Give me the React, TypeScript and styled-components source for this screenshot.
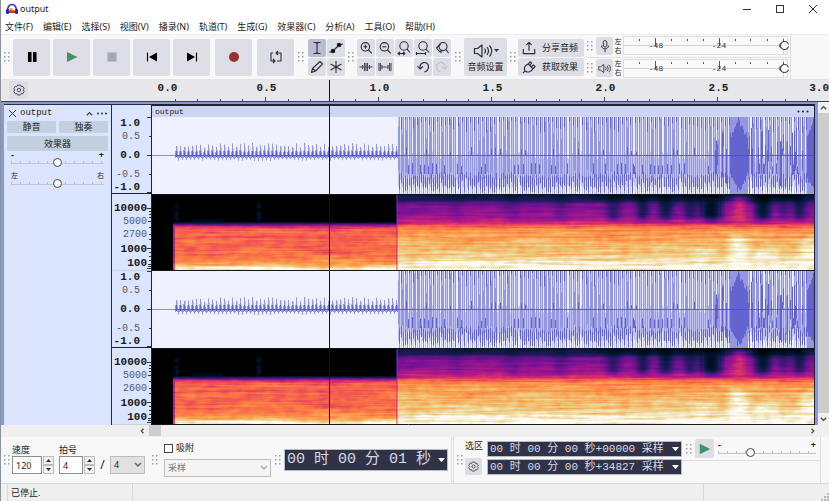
import React from "react";
import styled, { createGlobalStyle, css } from "styled-components";

const ui = `"Noto Sans", "Noto Sans CJK SC", sans-serif`;
const mono = `"Liberation Mono", "Noto Sans CJK SC", monospace`;

const GlobalStyle = createGlobalStyle`
  * { box-sizing: border-box; }
  body { margin: 0; background: #fff; overflow: hidden; }
  button, input, select { font: inherit; color: inherit; margin: 0; }
`;

const Window = styled.div`
  width: 100%;
  font: 9px/12px ${ui};
  color: #222;
  border-left: 1px solid #8a929a;
  background: #f0f0f0;
`;

/* ---------- title and menu ---------- */
const TitleBar = styled.header`
  display: flex;
  align-items: center;
  height: 18px;
  padding-left: 5px;
  background: #fff;
  svg { flex: none; }
`;
const Title = styled.span`
  flex: 1;
  margin-left: 2px;
`;
const WindowButton = styled.button`
  width: 33px;
  height: 18px;
  padding: 0;
  border: 0;
  background: none;
  display: grid;
  place-items: center;
`;
const MenuBar = styled.nav`
  display: flex;
  gap: 10px;
  height: 16px;
  padding: 2px 0 0 4px;
  background: #fff;
  white-space: nowrap;
`;
const MenuItem = styled.button`
  padding: 0;
  border: 0;
  background: none;
  line-height: 12px;
`;

/* ---------- toolbars ---------- */
const Toolbar = styled.div`
  display: flex;
  height: 46px;
  border-top: 1px solid #ececec;
  border-bottom: 1px solid #e2e2e4;
  background: #f8f8f9;
`;
const GripArea = styled.div<{ $w?: number }>`
  flex: none;
  display: grid;
  place-items: center;
  width: ${(p) => p.$w ?? 12}px;
`;
const Button = styled.button<{ $w: number; $h: number; $on?: boolean }>`
  flex: none;
  display: flex;
  align-items: center;
  justify-content: center;
  width: ${(p) => p.$w}px;
  height: ${(p) => p.$h}px;
  padding: 0;
  border: 0;
  border-radius: 2px;
  background: ${(p) => (p.$on ? "#b9bdd2" : "#dddee5")};
`;
const Transport = styled.div`
  display: flex;
  align-items: center;
  gap: 3px;
`;
const Spaced = styled.div`
  margin-left: 2px;
`;
const ToolGrid = styled.div<{ $cols: number }>`
  display: grid;
  grid-template-columns: repeat(${(p) => p.$cols}, 18px);
  grid-auto-rows: 18px;
  align-content: center;
  gap: 1px;
`;
const SetupButton = styled(Button)`
  flex-direction: column;
  align-self: center;
  gap: 1px;
`;
const Column = styled.div<{ $gap: number; $bottom?: number }>`
  display: flex;
  flex-direction: column;
  justify-content: center;
  gap: ${(p) => p.$gap}px;
  padding-bottom: ${(p) => p.$bottom ?? 0}px;
`;
const WideButton = styled(Button)`
  justify-content: flex-start;
  padding-left: 4px;
  gap: 6px;
`;
const Meters = styled.div`
  display: flex;
  flex-direction: column;
  width: 207px;
  border-right: 1px solid #dedee2;
`;
const MeterRow = styled.div`
  flex: 1;
  display: flex;
  align-items: center;
  & + & { border-top: 1px solid #e2e2e4; }
`;
const MeterLabels = styled.div`
  width: 10px;
  font-size: 7px;
  line-height: 9px;
  text-align: center;
`;
const MeterScale = styled.svg`
  flex: 1;
  height: 19px;
  min-width: 0;
`;

/* ---------- time ruler ---------- */
const RulerBar = styled.div`
  display: flex;
  height: 21px;
  background: #e8e8ea;
`;
const RulerCorner = styled.div`
  width: 151px;
  flex: none;
  padding: 1px 0 0 8px;
`;
const RulerScale = styled.div`
  position: relative;
  flex: 1;
  min-width: 0;
  display: flex;
  flex-direction: column;
`;
const RulerLabels = styled.div`
  display: flex;
  height: 17px;
  font: bold 11px/17px ${mono};
`;
const RulerLabel = styled.span<{ $grow: number; $align?: string }>`
  flex: ${(p) => p.$grow} 1 0;
  min-width: 0;
  text-align: ${(p) => p.$align ?? "center"};
`;
const RulerTicks = styled.svg`
  display: block;
  width: 100%;
  height: 4px;
`;
const Playhead = styled.div<{ $at: number }>`
  position: absolute;
  top: 0;
  bottom: 0;
  left: ${(p) => p.$at}%;
  width: 1px;
  background: #14141c;
`;

/* ---------- track ---------- */
const TrackArea = styled.main`
  display: flex;
  border-top: 1px solid #3a3f55;
`;
const TrackFrame = styled.div`
  flex: 1;
  min-width: 0;
  display: flex;
  border: solid #8597e0;
  border-width: 2px 3px 0 3px;
`;
const Panel = styled.section`
  width: 108px;
  flex: none;
  padding: 1px 3px 0 3px;
  border: solid #2a2c3a;
  border-width: 1px 1px 0 0;
  background: #dbe5ff;
`;
const PanelHead = styled.div`
  display: flex;
  align-items: center;
  gap: 4px;
  height: 15px;
  padding: 0 1px 0 2px;
  font: 9px/15px ${mono};
`;
const PanelName = styled.span`
  flex: 1;
`;
const PanelButtons = styled.div`
  display: grid;
  grid-template-columns: 1fr 1fr;
  gap: 3px;
`;
const PanelButton = styled.button<{ $wide?: boolean }>`
  height: ${(p) => (p.$wide ? 15 : 12)}px;
  padding: 0;
  border: 0;
  border-radius: 1px;
  background: #c1cfdf;
  line-height: 12px;
  ${(p) => p.$wide && css`grid-column: span 2;`}
`;
const SliderBox = styled.label<{ $small?: boolean }>`
  display: flex;
  flex-direction: column;
  height: 20px;
  padding: 0 4px;
  font: ${(p) => (p.$small ? "7px/9px" : "bold 9px/8px")} ${ui};
`;
const Ends = styled.span`
  display: flex;
  justify-content: space-between;
`;
const Slider = styled.input`
  appearance: none;
  flex: none;
  width: 100%;
  height: 9px;
  margin-top: -1px;
  background:
    repeating-linear-gradient(90deg, #b4bdca 0 1px, transparent 1px 9px) 0 3px / 100% 2px no-repeat,
    linear-gradient(#b9c6d6, #b9c6d6) 0 5px / 100% 1px no-repeat;
  &::-webkit-slider-thumb {
    appearance: none;
    width: 9px;
    height: 9px;
    border: 1px solid #444;
    border-radius: 50%;
    background: #fff;
  }
`;
const VRuler = styled.div`
  width: 39px;
  flex: none;
  padding-top: 12px;
  background: #dbe5ff;
  border-top: 1px solid #2a2c3a;
`;
const VSection = styled.div<{ $rows: string; $right: number; $top?: number; $line?: boolean }>`
  position: relative;
  display: grid;
  grid-template-rows: ${(p) => p.$rows};
  align-items: center;
  justify-items: end;
  padding: ${(p) => p.$top ?? 0}px ${(p) => p.$right}px 0 0;
  border-bottom: 1px solid ${(p) => (p.$line ? "#20222c" : "#c9cfdf")};
`;
const VLabel = styled.span<{ $bold?: boolean }>`
  font: ${(p) => (p.$bold ? "bold 11px/13px" : "10px/13px")} ${mono};
  color: ${(p) => (p.$bold ? "#181a24" : "#555a6c")};
`;
const VTicks = styled.svg`
  position: absolute;
  right: 0;
  top: 0;
`;
const Clip = styled.section`
  position: relative;
  flex: 1;
  min-width: 0;
  overflow: hidden;
  border: solid #20222e;
  border-width: 2px 1px 0 1px;
  background: #eff1ff;
`;
const ClipHead = styled.div`
  display: flex;
  justify-content: space-between;
  align-items: center;
  height: 11px;
  padding: 0 5px 0 3px;
  font: 8px/11px ${mono};
  background: #cdd5f2;
`;
const Drawing = styled.svg`
  display: block;
  width: 100%;
`;
const VScroll = styled.div`
  display: flex;
  flex-direction: column;
  justify-content: space-between;
  align-items: center;
  width: 11px;
  flex: none;
  background: linear-gradient(#f0f0f0 11px, #cdcdcd 11px calc(100% - 12px), #f0f0f0 0);
  padding: 2px 0;
`;
const HScroll = styled.div`
  display: flex;
  align-items: center;
  height: 12px;
  padding: 0 13px 0 138px;
  background: #efefef;
`;
const HTrack = styled.div`
  flex: 1;
  height: 12px;
  margin-left: 4px;
  background: linear-gradient(#cdcdcd, #cdcdcd) 0 0 / 12px 11px no-repeat;
`;

/* ---------- bottom bar ---------- */
const BottomBar = styled.div`
  display: flex;
  height: 47px;
  border-bottom: 1px solid #d9d9d9;
  background: #f8f8f9;
`;
const Field = styled.div<{ $w: number }>`
  width: ${(p) => p.$w}px;
  padding-top: 6px;
`;
const FieldLabel = styled.label<{ $indent?: number }>`
  display: block;
  line-height: 13px;
  padding-left: ${(p) => p.$indent ?? 0}px;
`;
const Row = styled.div`
  display: flex;
  align-items: center;
  height: 18px;
`;
const NumberBox = styled.input`
  flex: 1;
  min-width: 0;
  height: 18px;
  padding: 0 3px;
  border: 1px solid #8d8d8d;
  background: #fff;
`;
const Spin = styled.div`
  display: flex;
  flex-direction: column;
  width: 11px;
  margin-left: 1px;
`;
const SpinButton = styled.button`
  display: grid;
  place-items: center;
  height: 9px;
  padding: 0;
  border: 1px solid #bdbdbd;
  background: #f2f2f2;
`;
const SelectWrap = styled.div`
  display: grid;
  align-items: center;
  width: 100%;
  > * { grid-area: 1 / 1; }
  > svg { justify-self: end; margin-right: 3px; pointer-events: none; }
`;
const Select = styled.select<{ $light?: boolean }>`
  appearance: none;
  width: 100%;
  height: 18px;
  padding: 0 3px;
  border: 1px solid #bcbcbc;
  border-radius: 0;
  background: ${(p) => (p.$light ? "#f4f4f4" : "#e1e1e1")};
  color: ${(p) => (p.$light ? "#777" : "#222")};
  opacity: 1;
`;
const Slash = styled.span`
  width: 15px;
  text-align: center;
  font-size: 12px;
`;
const Beats = styled.div`
  display: flex;
  width: 36px;
  margin-left: 5px;
`;
const Denominator = styled.div`
  flex: 1;
`;
const Snap = styled.div`
  width: 107px;
  padding-top: 4px;
`;
const SnapLabel = styled.label`
  display: flex;
  align-items: center;
  gap: 3px;
  height: 14px;
  margin-bottom: 4px;
`;
const Check = styled.input`
  appearance: none;
  width: 9px;
  height: 9px;
  border: 1px solid #444;
  background: #fff;
`;
const TimeBox = styled.div<{ $big?: boolean }>`
  display: flex;
  align-items: center;
  justify-content: space-between;
  height: ${(p) => (p.$big ? 22 : 16)}px;
  width: ${(p) => (p.$big ? 164 : 195)}px;
  padding: 0 2px;
  border: 1px solid #b9bcc4;
  background: #303347;
  color: #d9dbe4;
  font: ${(p) => (p.$big ? "15px/20px" : "11px/14px")} ${mono};
  white-space: pre;
  align-self: ${(p) => (p.$big ? "center" : "auto")};
`;
const SelectionHead = styled.div`
  width: 22px;
  padding-top: 3px;
  display: flex;
  flex-direction: column;
  gap: 6px;
`;
const PlaySpeed = styled.div`
  width: 139px;
  border-right: 1px solid #dedee2;
`;
const PlayRow = styled.div`
  display: flex;
  align-items: center;
  height: 24px;
  border-bottom: 1px solid #dedee2;
`;
const SpeedSlider = styled(SliderBox)`
  flex: 1;
  padding-top: 2px;
`;
const Rule = styled.div`
  width: 3px;
  margin-left: 3px;
  border: solid #dedee2;
  border-width: 0 1px;
`;
const StatusBar = styled.footer`
  display: flex;
  height: 17px;
  padding-left: 6px;
  background: #efefef;
  line-height: 17px;
`;
const StatusCell = styled.div<{ $grow?: boolean; $w?: number }>`
  ${(p) => (p.$grow ? "flex: 1;" : `width: ${p.$w}px;`)}
  padding-left: 3px;
  border-left: 1px solid #d7d7d7;
  display: flex;
  justify-content: space-between;
  align-items: flex-end;
`;

/* ---------- small drawings ---------- */
const Dots = ({ w }: { w?: number }) => (
  <GripArea $w={w}>
    <svg width="6" height="10" fill="#9a9dac">
      {[0, 4, 8].map((y) => (
        <g key={y}>
          <rect x="0" y={y} width="1.5" height="1.5" />
          <rect x="4" y={y} width="1.5" height="1.5" />
        </g>
      ))}
    </svg>
  </GripArea>
);
const Icon = ({ s = 16, children, c = "#2a2c36", w = 1.1 }: { s?: number; children: React.ReactNode; c?: string; w?: number }) => (
  <svg width={s} height={s} viewBox="0 0 16 16" fill="none" stroke={c} strokeWidth={w} strokeLinejoin="round">
    {children}
  </svg>
);
const Lens = () => (
  <>
    <circle cx="7.4" cy="6.8" r="4.2" />
    <path d="M10.5 10l3.2 3.4" />
  </>
);
const SmallLens = () => (
  <>
    <circle cx="8" cy="6" r="4.200" />
    <path d="M11 9.200l3 3.300" />
  </>
);
const Gear = ({ s = 12 }: { s?: number }) => (
  <Icon s={s} w={1.3} c="#4a4c56">
    <path d="M6 1.500h4l.8 2 2.200-.3 2 3.400L13.600 8l1.400 1.600-2 3.400-2.200-.4-.8 2H6l-.8-2-2.200.4-2-3.400L2.400 8 1 6.600l2-3.400 2.200.3z" />
    <circle cx="8" cy="8" r="2.300" />
  </Icon>
);
const Speaker = ({ w = 22 }: { w?: number }) => (
  <svg width={w} height={(w * 16) / 22} viewBox="0 0 22 16" fill="none" stroke="#2a2c36" strokeWidth="1.200" strokeLinejoin="round">
    <path d="M2.500 5.500h3L10 2v12l-4.500-3.500h-3zM12.500 5.500q2 2.500 0 5M15 4q3 4 0 8M17.500 2.500q4.500 5.500 0 11" />
  </svg>
);
const Chevron = ({ d, s = 7, c = "#444" }: { d: string; s?: number; c?: string }) => (
  <svg width={s} height={s} viewBox="0 0 8 8" fill="none" stroke={c} strokeWidth="1.500">
    <path d={d} />
  </svg>
);
const Tri = ({ up, c = "#333", s = 5 }: { up?: boolean; c?: string; s?: number }) => (
  <svg width={s} height={s * 0.6} viewBox="0 0 10 6" fill={c}>
    <path d={up ? "M0 6L5 0l5 6z" : "M0 0h10L5 6z"} />
  </svg>
);

const Meter = ({ name }: { name: string }) => (
  <>
    <MeterLabels>
      左<br />右
    </MeterLabels>
    <MeterScale viewBox="0 0 167 19" preserveAspectRatio="none" role="img" aria-label={name}>
      <rect x=".5" y=".5" width="164" height="18" fill="#fafafb" stroke="#dcdce1" />
      <path d="M0 9.500H165M160.500 1V18" stroke="#d3d3d9" />
      <path d="M16.500 3v2M48.500 3v2M64.500 3v2M80.500 3v2M112.500 3v2M127.500 3v2M144.500 3v2M32.500 2v8M96.500 2v8M160.500 3v3" stroke="#555" />
      <g fontFamily="Liberation Mono" fontSize="8" fill="#333" textAnchor="middle">
        <text x="33" y="12">-48</text>
        <text x="96" y="12">-24</text>
        <text x="158" y="12">0</text>
      </g>
      <circle cx="161.500" cy="9.500" r="4" fill="#fff" stroke="#444" strokeWidth="1.200" />
      <path d="M162 9.500h4" stroke="#fafafb" strokeWidth="2" />
    </MeterScale>
  </>
);

/* ---------- waveform ---------- */
const W = 662;
const H = 77;
const MID = 38;
function buildWave() {
  let seed = 77;
  const rnd = () => {
    seed = (seed * 1103515245 + 12345) % 2147483648;
    return seed / 2147483648;
  };
  let dark = "";
  let mid = "";
  let light = "";
  const seg = (x: number, a: number, b: number) => `M${x + 0.5} ${a.toFixed(1)}V${b.toFixed(1)}`;
  for (let x = 23; x < 246; x++) {
    const p = x % 4;
    const grow = 1 + Math.min(1, (x - 23) / 60) * 0.25;
    if (p === 0) {
      mid += seg(x, MID - (6 + rnd() * 4) * grow, MID + 1);
      dark += seg(x, MID - 4, MID + 2);
    } else if (p === 1) {
      light += seg(x, MID - 4 - rnd() * 5, MID);
      mid += seg(x, MID - 2 - rnd() * 2, MID + 3);
    } else if (p === 2) mid += seg(x, MID, MID + 4 + rnd() * 2);
    else mid += seg(x, MID - 3 - rnd() * 2, MID + 3);
  }
  let phase = 0;
  let top = 8;
  let low = 60;
  for (let x = 246; x < W; x++) {
    const solid = (x > 577 && x < 596) || x > 654;
    const busy = x > 560;
    phase += 1;
    if (phase > 3 + (rnd() > 0.85 ? 1 : 0)) {
      phase = 0;
      top = 2 + rnd() * 14;
      low = 54 + rnd() * 8;
    }
    if (solid) {
      const c = x > 654 ? 662 : 586;
      const k = Math.abs(x - c) / 10;
      mid += seg(x, 0, H);
      dark += seg(x, k * 18 + rnd() * 8, H - k * 16 - rnd() * 8);
      continue;
    }
    if (phase === 0) {
      mid += seg(x, 0, low);
      dark += seg(x, 0, top);
      dark += seg(x, low, low + 6 + rnd() * 10);
      light += seg(x, low, H);
    } else if (phase === 1) {
      light += seg(x, 0, 70);
      if (rnd() > 0.45) mid += seg(x, rnd() * 25, 52 + rnd() * 12);
      if (rnd() > 0.8) dark += seg(x, 30 + rnd() * 5, 38);
    } else if (phase === 2) {
      mid += seg(x, 0, H);
      dark += seg(x, 56 + rnd() * 6, H - rnd() * 6);
    } else {
      light += seg(x, MID - 4 + rnd() * 8, 60 + rnd() * 10);
      if (rnd() > 0.6) dark += seg(x, 46 + rnd() * 4, 57);
    }
    if (busy && rnd() > 0.6) {
      const a = 10 + rnd() * 25;
      dark += seg(x, a, a + 15 + rnd() * 30);
    }
  }
  return { dark, mid, light };
}
const wave = buildWave();
const Waveform = () => (
  <Drawing height={H} viewBox={`0 0 ${W} ${H}`} preserveAspectRatio="none" role="img" aria-label="waveform">
    <rect width={W} height={H} fill="#eff1ff" />
    <path d={wave.light} stroke="#c3c4f1" />
    <path d={wave.mid} stroke="#9697e1" />
    <path d={wave.dark} stroke="#6464d1" />
    <path d="M0 38.500H23" stroke="#8a8ae0" />
    <path d="M23 38.500H662" stroke="#55566c" opacity=".8" />
  </Drawing>
);

/* ---------- spectrogram: grey level is loudness, mapped to colour by the filter ---------- */
const stops = [
  [0, 0, 0], [0, 26, 58], [52, 24, 108], [122, 18, 150], [182, 26, 132], [230, 62, 92],
  [250, 112, 70], [251, 156, 76], [240, 198, 120], [240, 226, 178], [255, 252, 245],
];
const table = (i: number) => stops.map((s) => (s[i] / 255).toFixed(3)).join(" ");
const grey = (v: number) => {
  const n = Math.round(v * 255);
  return `rgb(${n},${n},${n})`;
};
const Grad = ({ id, at }: { id: string; at: [number, number][] }) => (
  <linearGradient id={id} x1="0" y1="0" x2="0" y2="1">
    {at.map(([o, v], i) => (
      <stop key={i} offset={o} stopColor={grey(v)} />
    ))}
  </linearGradient>
);
const dips = [
  [456, 11, 0.5], [487, 8, 0.8], [508, 12, 0.7], [533, 10, 0.6], [550, 18, 1], [604, 14, 0.8], [628, 7, 0.5], [643, 9, 0.7],
  [300, 8, 0.2], [355, 10, 0.2], [405, 8, 0.3],
];
const Spectrogram = ({ id }: { id: string }) => (
  <Drawing height={H} viewBox={`0 0 ${W} ${H}`} preserveAspectRatio="none" role="img" aria-label="spectrogram">
    <defs>
      <Grad id={`${id}q`} at={[[0, 0], [0.36, 0], [0.39, 0.22], [0.42, 0.42], [0.46, 0.57], [0.75, 0.59], [0.86, 0.63], [0.93, 0.76], [0.96, 0.97], [1, 0.9]]} />
      <Grad id={`${id}l`} at={[[0, 0.1], [0.08, 0.16], [0.13, 0.29], [0.3, 0.36], [0.38, 0.44], [0.41, 0.56], [0.46, 0.67], [0.62, 0.74], [0.8, 0.82], [0.9, 0.94], [1, 1]]} />
      <filter id={`${id}b`} x="-100%" width="300%" y="-20%" height="140%">
        <feGaussianBlur stdDeviation="4 3" />
      </filter>
      <filter id={`${id}s`} x="-100%" width="300%" y="-20%" height="140%">
        <feGaussianBlur stdDeviation="1" />
      </filter>
      <filter id={`${id}f`} x="0" y="0" width="100%" height="100%" colorInterpolationFilters="sRGB">
        <feTurbulence type="fractalNoise" baseFrequency="0.014 0.4" numOctaves="3" seed="4" result="n" />
        <feColorMatrix in="n" values="1 0 0 0 0  1 0 0 0 0  1 0 0 0 0  0 0 0 0 1" result="streak" />
        <feTurbulence type="fractalNoise" baseFrequency="0.09 0.16" numOctaves="2" seed="9" result="m" />
        <feColorMatrix in="m" values="1 0 0 0 0  1 0 0 0 0  1 0 0 0 0  0 0 0 0 1" result="grain" />
        <feComposite in="streak" in2="grain" operator="arithmetic" k2="0.65" k3="0.35" result="noise" />
        <feComposite in="SourceGraphic" in2="noise" operator="arithmetic" k1="0.6" k2="0.7" result="level" />
        <feComponentTransfer in="level">
          <feFuncR type="table" tableValues={table(0)} />
          <feFuncG type="table" tableValues={table(1)} />
          <feFuncB type="table" tableValues={table(2)} />
        </feComponentTransfer>
      </filter>
    </defs>
    <g filter={`url(#${id}f)`}>
      <rect width={W} height={H} fill="#000" />
      <rect x="21" width="225" height={H} fill={`url(#${id}q)`} />
      <rect x="21" y="30" width="2" height="47" fill={grey(0.35)} opacity=".7" />
      <g fill={grey(0.08)} filter={`url(#${id}s)`}>
        <rect x="23" y="10" width="3" height="5" />
        <rect x="23" y="17" width="3" height="10" />
        <rect x="105" y="9" width="4" height="6" />
        <rect x="105" y="17" width="4" height="10" />
        <rect x="40" y="26" width="30" height="2" />
      </g>
      <rect x="245" width="417" height={H} fill={`url(#${id}l)`} />
      <rect x="244" y="0" width="2" height={H} fill={grey(0.42)} opacity=".5" />
      <g filter={`url(#${id}b)`}>
        {dips.map(([x, w, o]) => (
          <rect key={x} x={x} y="-6" width={w} height="32" fill={grey(0.03)} opacity={o} />
        ))}
        <rect x="440" y="-4" width="130" height="8" fill="#000" opacity=".6" />
        <rect x="600" y="-4" width="50" height="9" fill="#000" opacity=".7" />
        <rect x="582" y="4" width="10" height="28" fill={grey(0.5)} opacity=".9" />
        <rect x="577" y="42" width="18" height="35" fill={grey(1)} opacity=".8" />
        <rect x="540" y="56" width="20" height="10" fill={grey(1)} opacity=".6" />
        <rect x="604" y="54" width="24" height="18" fill={grey(1)} opacity=".6" />
        <rect x="648" y="46" width="20" height="28" fill={grey(1)} opacity=".7" />
      </g>
    </g>
    <path d="M0 76.500H662M0 .5H662" stroke="#15151c" />
  </Drawing>
);

const LevelRuler = () => (
  <VSection $rows="13px 13px 25px 13px 12px" $right={11} $line>
    <VLabel $bold>1.0</VLabel>
    <VLabel>0.5</VLabel>
    <VLabel $bold>0.0</VLabel>
    <VLabel>-0.5</VLabel>
    <VLabel $bold>-1.0</VLabel>
    <VTicks width="4" height="76" stroke="#333">
      <path d="M0 .5H4M2 19.500H4M0 38.500H4M2 57.500H4M0 75.500H4" />
    </VTicks>
  </VSection>
);
const PitchRuler = ({ third }: { third: string }) => (
  <VSection $rows="13px 13px 13px 16px 13px" $top={8} $right={4}>
    <VLabel $bold>10000</VLabel>
    <VLabel>5000</VLabel>
    <VLabel>{third}</VLabel>
    <VLabel $bold>1000</VLabel>
    <VLabel $bold>100</VLabel>
    <VTicks width="4" height="76" stroke="#333">
      <path d="M0 14.500H4M2 17.500H4M2 20.500H4M2 23.500H4M1 27.500H4M2 33.500H4M2 40.500H4M2 45.500H4M0 54.500H4M2 58.500H4M2 62.500H4M2 66.500H4M1 70.500H4M1 72.500H4M0 74.500H4" />
    </VTicks>
  </VSection>
);

const menus = ["文件(F)", "编辑(E)", "选择(S)", "视图(V)", "播录(N)", "轨道(T)", "生成(G)", "效果器(C)", "分析(A)", "工具(O)", "帮助(H)"];
const minor = Array.from({ length: 30 }, (_, i) => {
  const x = Math.round((i + 1) * 22.6) + 0.5;
  return `M${x} ${(i + 1) % 5 === 0 ? 0 : 2}V4`;
}).join("");

const Spinner = ({ name }: { name: string }) => (
  <Spin>
    <SpinButton aria-label={`${name} +`}><Tri up /></SpinButton>
    <SpinButton aria-label={`${name} -`}><Tri /></SpinButton>
  </Spin>
);

export default function App() {
  return (
    <Window>
      <GlobalStyle />
      <TitleBar>
        <svg width="12" height="12" viewBox="0 0 12 12">
          <path d="M2.500 8Q4 3.500 6 5.500T9.500 8V10h-7z" fill="#f5a000" />
          <path d="M3 8.500L4.500 7 6 8.500 7.500 7 9 8.500V10H3z" fill="#e02a10" />
          <path d="M1.500 8C1.300-.8 10.700-.8 10.500 8" fill="none" stroke="#2630d8" strokeWidth="1.500" />
          <rect x="0" y="6" width="3" height="5" rx="1.300" fill="#1d22d0" />
          <rect x="9" y="6" width="3" height="5" rx="1.300" fill="#1d22d0" />
        </svg>
        <Title>output</Title>
        <WindowButton aria-label="最小化"><svg width="8" height="8" stroke="#333"><path d="M0 4.500H8" /></svg></WindowButton>
        <WindowButton aria-label="最大化"><svg width="8" height="8" stroke="#333" fill="none"><rect x=".5" y=".5" width="7" height="7" /></svg></WindowButton>
        <WindowButton aria-label="关闭"><svg width="8" height="8" stroke="#333"><path d="M0 0L8 8M8 0L0 8" /></svg></WindowButton>
      </TitleBar>
      <MenuBar>{menus.map((m) => <MenuItem key={m}>{m}</MenuItem>)}</MenuBar>

      <Toolbar>
        <Dots />
        <Transport>
          <Button $w={37} $h={37} aria-label="暂停"><Icon><path d="M4.500 3.500h2.500v9H4.500zM9.500 3.500H12v9H9.500z" fill="#000" stroke="#000" /></Icon></Button>
          <Button $w={37} $h={37} aria-label="播放"><Icon c="none"><path d="M3 3l10.500 5L3 13z" fill="#45906a" /></Icon></Button>
          <Button $w={37} $h={37} aria-label="停止"><Icon c="none"><path d="M3.500 3.500h9v9h-9z" fill="#a2a7b1" /></Icon></Button>
          <Button $w={37} $h={37} aria-label="跳至开头"><Icon c="#000"><path d="M3.500 3.500v9" /><path d="M13 3.500v9L5 8z" fill="#000" stroke="none" /></Icon></Button>
          <Button $w={37} $h={37} aria-label="跳至结尾"><Icon c="#000"><path d="M12.500 3.500v9" /><path d="M3 3.500v9L11 8z" fill="#000" stroke="none" /></Icon></Button>
          <Spaced><Button $w={37} $h={37} aria-label="录制"><Icon c="none"><circle cx="8" cy="8" r="5" fill="#97302f" /></Icon></Button></Spaced>
          <Spaced><Button $w={37} $h={37} aria-label="循环"><Icon><path d="M5 4H3v8h4M9 12h4V4H8M10 2L8 4l2 2M5 10l2 2-2 2" /></Icon></Button></Spaced>
        </Transport>
        <Dots w={14} />
        <ToolGrid $cols={2}>
          <Button $w={18} $h={18} $on aria-label="选择工具"><Icon><path d="M4.500 2.500h2.500l1 1 1-1h2.500M8 3.500v9M4.500 13.500h2.500l1-1 1 1h2.500" /></Icon></Button>
          <Button $w={18} $h={18} aria-label="包络工具"><Icon><path d="M1 12h3l7-7 4-1" /><circle cx="5" cy="11" r="1.800" fill="#000" /><circle cx="11" cy="5" r="1.800" fill="#000" /></Icon></Button>
          <Button $w={18} $h={18} aria-label="绘制工具"><Icon><path d="M2.500 13.500l1-4L11 2.500l2.500 2.500-7 7zM3.500 9.500l3 2.500" /></Icon></Button>
          <Button $w={18} $h={18} aria-label="多功能工具"><Icon><path d="M8 2v12M2.500 5l11 6M13.500 5l-11 6" /></Icon></Button>
        </ToolGrid>
        <Dots w={12} />
        <ToolGrid $cols={5}>
          <Button $w={18} $h={18} aria-label="放大"><Icon><Lens /><path d="M5.400 6.800h4M7.400 4.800v4" /></Icon></Button>
          <Button $w={18} $h={18} aria-label="缩小"><Icon><Lens /><path d="M5.400 6.800h4" /></Icon></Button>
          <Button $w={18} $h={18} aria-label="适应选区"><Icon><SmallLens /><path d="M2 13.500h7M4 12l-2 1.500L4 15M7 12l2 1.500L7 15" /></Icon></Button>
          <Button $w={18} $h={18} aria-label="适应项目"><Icon><SmallLens /><path d="M1.500 13.500h9M1.500 12v3M10.500 12v3" /></Icon></Button>
          <Button $w={18} $h={18} aria-label="缩放切换"><Icon><circle cx="9" cy="6.500" r="4" /><path d="M12 9.500l2.500 3.500M7 3.500L2.500 8l3 3.500 4-1M5.500 11.500l2 1" /></Icon></Button>
          <Button $w={18} $h={18} aria-label="修剪"><Icon c="#4a4c56"><path d="M1.500 8h13M4.500 6v4M6.500 4v8M8 4v8M9.500 4v8M11.500 6v4" /></Icon></Button>
          <Button $w={18} $h={18} aria-label="静音选区"><Icon c="#4a4c56"><path d="M2 4v8M3.500 4v8M5 6v4M5 8h6M11 6v4M12.500 4v8M14 4v8" /></Icon></Button>
          <span />
          <Button $w={18} $h={18} aria-label="撤销"><Icon><path d="M2.500 7l2.500 3 3-2.500M5 10C4 3 12 1 13.500 7c.5 3-1.500 5.500-4 6" /></Icon></Button>
          <Button $w={18} $h={18} aria-label="重做"><Icon c="#bfc1c9"><path d="M13.500 7L11 10 8 7.500M11 10C12 3 4 1 2.500 7c-.5 3 1.500 5.500 4 6" /></Icon></Button>
        </ToolGrid>
        <Dots w={13} />
        <SetupButton $w={43} $h={38}>
          <Row><Speaker /><Tri /></Row>
          <span>音频设置</span>
        </SetupButton>
        <Dots w={11} />
        <Column $gap={1}>
          <WideButton $w={66} $h={18}>
            <Icon s={14} w={1.300}><path d="M1.500 9v5.500h13V9M8 11V1.500M5 4.500l3-3 3 3" /></Icon>分享音频
          </WideButton>
          <WideButton $w={66} $h={18}>
            <Icon s={14} w={1.300}><path d="M1 15l2.500-2.500M3.500 12.500C1.500 9 3.500 6 7 4.500l5.500 5.500c-2 3.500-5.500 5-9 2.500M7 4.500L9.500 2l1.500 1.500-2 2.500M12.500 10L15 7.500 13 5.500 10.500 8" /></Icon>获取效果
          </WideButton>
        </Column>
        <Meters>
          <MeterRow>
            <Dots />
            <Button $w={17} $h={18} aria-label="录音电平"><Icon s={14}><path d="M6 3q2-3 4 0v5q-2 3-4 0zM4 7.500c0 5 8 5 8 0M8 11.500V15" /></Icon></Button>
            <Meter name="录音电平表" />
          </MeterRow>
          <MeterRow>
            <Dots />
            <Button $w={17} $h={18} aria-label="播放电平"><Speaker w={15} /></Button>
            <Meter name="播放电平表" />
          </MeterRow>
        </Meters>
      </Toolbar>

      <RulerBar>
        <RulerCorner><Button $w={19} $h={18} aria-label="时间轴选项"><Gear /></Button></RulerCorner>
        <RulerScale>
          <RulerLabels>
            <RulerLabel $grow={31}>0.0</RulerLabel>
            <RulerLabel $grow={27} />
            {["0.5", "1.0", "1.5", "2.0", "2.5"].map((t) => <RulerLabel key={t} $grow={113}>{t}</RulerLabel>)}
            <RulerLabel $grow={54} $align="right">3.0</RulerLabel>
          </RulerLabels>
          <RulerTicks viewBox="0 0 677 4" preserveAspectRatio="none" stroke="#444"><path d={minor} /></RulerTicks>
          <Playhead $at={26.2} />
        </RulerScale>
      </RulerBar>

      <TrackArea>
        <TrackFrame>
          <Panel>
            <PanelHead>
              <svg width="7" height="7" stroke="#333"><path d="M0 0L7 7M7 0L0 7" /></svg>
              <PanelName>output</PanelName>
              <Chevron d="M1 6l3-3 3 3" />
              <svg width="10" height="3" fill="#333"><circle cx="1" cy="1.500" r="1" /><circle cx="5" cy="1.500" r="1" /><circle cx="9" cy="1.500" r="1" /></svg>
            </PanelHead>
            <PanelButtons>
              <PanelButton>静音</PanelButton>
              <PanelButton>独奏</PanelButton>
              <PanelButton $wide>效果器</PanelButton>
            </PanelButtons>
            <SliderBox><Ends><span>-</span><span>+</span></Ends><Slider type="range" aria-label="增益" defaultValue={50} /></SliderBox>
            <SliderBox $small><Ends><span>左</span><span>右</span></Ends><Slider type="range" aria-label="声像" defaultValue={50} /></SliderBox>
          </Panel>
          <VRuler>
            <LevelRuler />
            <PitchRuler third="2700" />
            <LevelRuler />
            <PitchRuler third="2600" />
          </VRuler>
          <Clip>
            <ClipHead>
              <span>output</span>
              <svg width="12" height="3" fill="#222"><circle cx="1.500" cy="1.500" r="1" /><circle cx="6" cy="1.500" r="1" /><circle cx="10.500" cy="1.500" r="1" /></svg>
            </ClipHead>
            <Waveform />
            <Spectrogram id="a" />
            <Waveform />
            <Spectrogram id="b" />
            <Playhead $at={26.8} />
          </Clip>
        </TrackFrame>
        <VScroll><Chevron d="M1 6l3-3 3 3" /><Chevron d="M1 2l3 3 3-3" /></VScroll>
      </TrackArea>
      <HScroll>
        <Chevron s={6} d="M6 1L3 4l3 3" />
        <HTrack />
        <Chevron s={6} d="M2 1l3 3-3 3" />
      </HScroll>

      <BottomBar>
        <Dots w={11} />
        <Field $w={42}>
          <FieldLabel htmlFor="tempo">速度</FieldLabel>
          <Row><NumberBox id="tempo" defaultValue="120" /><Spinner name="速度" /></Row>
        </Field>
        <Field $w={91}>
          <FieldLabel htmlFor="beats" $indent={5}>拍号</FieldLabel>
          <Row>
            <Beats><NumberBox id="beats" defaultValue="4" /><Spinner name="拍号" /></Beats>
            <Slash>/</Slash>
            <Denominator>
              <SelectWrap>
                <Select aria-label="音符时值"><option>4</option></Select>
                <Chevron d="M1 2l3 3 3-3" s={8} c="#666" />
              </SelectWrap>
            </Denominator>
          </Row>
        </Field>
        <Dots w={19} />
        <Snap>
          <SnapLabel><Check type="checkbox" />吸附</SnapLabel>
          <SelectWrap>
            <Select $light disabled aria-label="吸附到"><option>采样</option></Select>
            <Chevron d="M1 2l3 3 3-3" c="#aaa" s={8} />
          </SelectWrap>
        </Snap>
        <Dots w={13} />
        <TimeBox $big><span>00 时 00 分 01 秒</span><Tri c="#fff" s={7} /></TimeBox>
        <Rule />
        <Dots w={11} />
        <SelectionHead>
          <span>选区</span>
          <Button $w={17} $h={17} aria-label="选区选项"><Gear s={11} /></Button>
        </SelectionHead>
        <Column $gap={2} $bottom={4}>
          <TimeBox><span>00 时 00 分 00 秒+00000 采样</span><Tri c="#fff" s={7} /></TimeBox>
          <TimeBox><span>00 时 00 分 00 秒+34827 采样</span><Tri c="#fff" s={7} /></TimeBox>
        </Column>
        <PlaySpeed>
          <PlayRow>
            <Dots w={13} />
            <Button $w={19} $h={19} aria-label="按速播放"><Icon s={14} c="none"><path d="M2 2l12 6L2 14z" fill="#45906a" /></Icon></Button>
            <SpeedSlider><Ends><span>-</span><span>+</span></Ends><Slider type="range" aria-label="播放速度" defaultValue={32} /></SpeedSlider>
          </PlayRow>
        </PlaySpeed>
      </BottomBar>
      <StatusBar>
        <StatusCell $w={125}>已停止.</StatusCell>
        <StatusCell $grow />
        <StatusCell $w={126}>
          <span />
          <svg width="8" height="8" fill="#b5b5b5"><path d="M6 0h2v2H6zM3 3h2v2H3zM6 3h2v2H6zM0 6h2v2H0zM3 6h2v2H3zM6 6h2v2H6z" /></svg>
        </StatusCell>
      </StatusBar>
    </Window>
  );
}
